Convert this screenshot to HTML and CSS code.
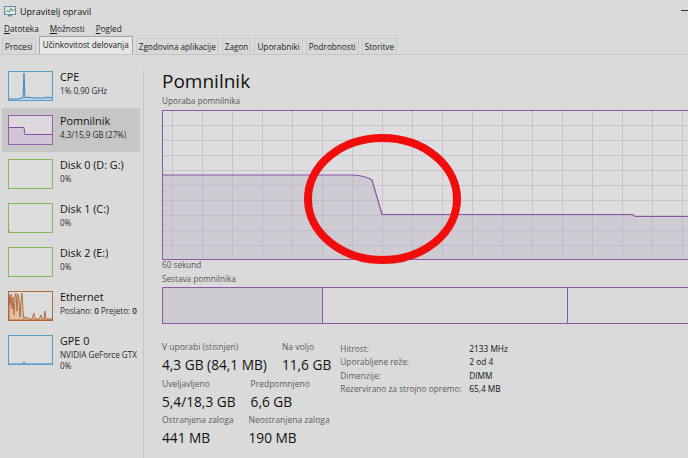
FILE: index.html
```html
<!DOCTYPE html>
<html lang="sl">
<head>
<meta charset="utf-8">
<title>Upravitelj opravil</title>
<link rel="stylesheet" href="styles.css">
</head>
<body>
<div class="window">
  <header class="titlebar">
    <svg class="app-icon" width="12" height="11" viewBox="0 0 12 11">
      <rect x="0.5" y="0.5" width="11" height="8" fill="#dfe8ef" stroke="#6b8aa3"/>
      <polyline points="1.5,6.5 3.5,4.5 5,6 7,2.5 8.5,5 10.5,3" fill="none" stroke="#3a9a48" stroke-width="1"/>
      <rect x="4" y="9" width="4" height="1.5" fill="#7a8c99"/>
    </svg>
    <span class="title">Upravitelj opravil</span>
    <span class="minimize"></span>
  </header>
  <nav class="menubar">
    <span class="menu"><u>D</u>atoteka</span>
    <span class="menu"><u>M</u>ožnosti</span>
    <span class="menu"><u>P</u>ogled</span>
  </nav>
  <div class="tabs">
    <span class="tab">Procesi</span>
    <span class="tab active">Učinkovitost delovanja</span>
    <span class="tab">Zgodovina aplikacije</span>
    <span class="tab">Zagon</span>
    <span class="tab">Uporabniki</span>
    <span class="tab">Podrobnosti</span>
    <span class="tab">Storitve</span>
  </div>
  <div class="panes">
    <aside class="sidebar">
      <div class="item">
        <svg class="thumb" width="45" height="30" viewBox="0 0 45 30">
          <rect x="0.5" y="0.5" width="44" height="29" fill="#dcdcdc" stroke="#5a9bc9"/>
          <polygon points="1,28 10,28 13,27 15,27 16,2 17,27 20,26 25,27 35,27 40,26 44,27 44,29 1,29" fill="#b9d3e6"/>
          <polyline points="1,28 10,28 13,27 15,27 16,2 17,27 20,26 25,27 35,27 40,26 44,27" fill="none" stroke="#3b86c0" stroke-width="1"/>
        </svg>
        <div class="item-text">
          <div class="item-name">CPE</div>
          <div class="item-sub">1% 0,90 GHz</div>
        </div>
      </div>
      <div class="item selected">
        <svg class="thumb" width="45" height="30" viewBox="0 0 45 30">
          <rect x="0.5" y="0.5" width="44" height="29" fill="#dcd8de" stroke="#9b5db5"/>
          <polygon points="1,12.5 16,12.5 17,19.5 44,19.5 44,29 1,29" fill="#d0c4d6"/>
          <polyline points="1,12.5 16,12.5 17,19.5 44,19.5" fill="none" stroke="#8a4aa6" stroke-width="1"/>
        </svg>
        <div class="item-text">
          <div class="item-name">Pomnilnik</div>
          <div class="item-sub">4,3/15,9 GB (27%)</div>
        </div>
      </div>
      <div class="item">
        <svg class="thumb" width="45" height="30" viewBox="0 0 45 30">
          <rect x="0.5" y="0.5" width="44" height="29" fill="#dcdcdc" stroke="#83bb5c"/>
        </svg>
        <div class="item-text">
          <div class="item-name">Disk 0 (D: G:)</div>
          <div class="item-sub">0%</div>
        </div>
      </div>
      <div class="item">
        <svg class="thumb" width="45" height="30" viewBox="0 0 45 30">
          <rect x="0.5" y="0.5" width="44" height="29" fill="#dcdcdc" stroke="#83bb5c"/>
          <polygon points="1,27 2,29 1,29" fill="#4f8f2a"/>
        </svg>
        <div class="item-text">
          <div class="item-name">Disk 1 (C:)</div>
          <div class="item-sub">0%</div>
        </div>
      </div>
      <div class="item">
        <svg class="thumb" width="45" height="30" viewBox="0 0 45 30">
          <rect x="0.5" y="0.5" width="44" height="29" fill="#dcdcdc" stroke="#83bb5c"/>
        </svg>
        <div class="item-text">
          <div class="item-name">Disk 2 (E:)</div>
          <div class="item-sub">0%</div>
        </div>
      </div>
      <div class="item">
        <svg class="thumb" width="45" height="30" viewBox="0 0 45 30">
          <rect x="0.5" y="0.5" width="44" height="29" fill="#dcdcdc" stroke="#b8683a"/>
          <polygon points="1,29 1,4 2,14 3,3 4,18 5,6 6,24 7,4 8,2 9,20 10,3 11,8 12,26 13,10 14,2 15,20 16,28 17,26 18,27 19,26 21,28 24,28 26,22 27,28 31,28 33,24 34,28 36,28 37,20 38,28 41,28 44,28 44,29" fill="#e2c0a6" stroke="#a85a2a" stroke-width="0.8"/>
        </svg>
        <div class="item-text">
          <div class="item-name">Ethernet</div>
          <div class="item-sub">Poslano: <b>0</b> Prejeto: <b>0</b></div>
        </div>
      </div>
      <div class="item">
        <svg class="thumb" width="45" height="30" viewBox="0 0 45 30">
          <rect x="0.5" y="0.5" width="44" height="29" fill="#dcdcdc" stroke="#5a9bc9"/>
          <polygon points="1,28.5 15,28.5 16,26 17,28.5 44,28.5 44,29 1,29" fill="#3b86c0"/>
        </svg>
        <div class="item-text">
          <div class="item-name">GPE 0</div>
          <div class="item-sub">NVIDIA GeForce GTX</div>
          <div class="item-sub">0%</div>
        </div>
      </div>
    </aside>
    <div class="divider"></div>
    <main class="content">
      <h1 class="heading">Pomnilnik</h1>
      <div class="caption caption-top">Uporaba pomnilnika</div>
      <div class="graph">
        <svg width="540" height="148" viewBox="0 0 540 148">
          <g stroke="#c7c3ca" stroke-width="1">
            <line x1="9.5" y1="0" x2="9.5" y2="148"/>
            <line x1="39.5" y1="0" x2="39.5" y2="148"/>
            <line x1="69.5" y1="0" x2="69.5" y2="148"/>
            <line x1="99.5" y1="0" x2="99.5" y2="148"/>
            <line x1="129.5" y1="0" x2="129.5" y2="148"/>
            <line x1="159.5" y1="0" x2="159.5" y2="148"/>
            <line x1="189.5" y1="0" x2="189.5" y2="148"/>
            <line x1="219.5" y1="0" x2="219.5" y2="148"/>
            <line x1="249.5" y1="0" x2="249.5" y2="148"/>
            <line x1="279.5" y1="0" x2="279.5" y2="148"/>
            <line x1="309.5" y1="0" x2="309.5" y2="148"/>
            <line x1="339.5" y1="0" x2="339.5" y2="148"/>
            <line x1="369.5" y1="0" x2="369.5" y2="148"/>
            <line x1="399.5" y1="0" x2="399.5" y2="148"/>
            <line x1="429.5" y1="0" x2="429.5" y2="148"/>
            <line x1="459.5" y1="0" x2="459.5" y2="148"/>
            <line x1="489.5" y1="0" x2="489.5" y2="148"/>
            <line x1="519.5" y1="0" x2="519.5" y2="148"/>
            <line x1="0" y1="14.5" x2="540" y2="14.5"/>
            <line x1="0" y1="29.5" x2="540" y2="29.5"/>
            <line x1="0" y1="44.5" x2="540" y2="44.5"/>
            <line x1="0" y1="59.5" x2="540" y2="59.5"/>
            <line x1="0" y1="74.5" x2="540" y2="74.5"/>
            <line x1="0" y1="89.5" x2="540" y2="89.5"/>
            <line x1="0" y1="104.5" x2="540" y2="104.5"/>
            <line x1="0" y1="119.5" x2="540" y2="119.5"/>
            <line x1="0" y1="134.5" x2="540" y2="134.5"/>
          </g>
          <path d="M0,64 L189,64 Q202,64.5 209,69 L219,103.5 L470,103.5 L472,105.5 L540,105.5 L540,148 L0,148 Z" fill="#b8b2bd" fill-opacity="0.4"/>
          <path d="M0,64 L189,64 Q202,64.5 209,69 L219,103.5 L470,103.5 L472,105.5 L540,105.5" fill="none" stroke="#8b52a8" stroke-width="1.2"/>
        </svg>
      </div>
      <div class="caption">60 sekund</div>
      <div class="caption caption-gap">Sestava pomnilnika</div>
      <div class="composition">
        <div class="seg seg-used"></div>
        <div class="seg seg-standby"></div>
        <div class="seg seg-free"></div>
      </div>
      <div class="stats">
        <div class="stats-left">
          <div class="stat-row">
            <div class="stat"><div class="label">V uporabi (stisnjen)</div><div class="value">4,3 GB (84,1 MB)</div></div>
            <div class="stat"><div class="label">Na voljo</div><div class="value">11,6 GB</div></div>
          </div>
          <div class="stat-row">
            <div class="stat"><div class="label">Uveljavljeno</div><div class="value">5,4/18,3 GB</div></div>
            <div class="stat"><div class="label">Predpomnjeno</div><div class="value">6,6 GB</div></div>
          </div>
          <div class="stat-row">
            <div class="stat"><div class="label">Ostranjena zaloga</div><div class="value">441 MB</div></div>
            <div class="stat"><div class="label">Neostranjena zaloga</div><div class="value">190 MB</div></div>
          </div>
        </div>
        <div class="props">
          <div class="prop"><span class="prop-label">Hitrost:</span><span class="prop-value">2133 MHz</span></div>
          <div class="prop"><span class="prop-label">Uporabljene reže:</span><span class="prop-value">2 od 4</span></div>
          <div class="prop"><span class="prop-label">Dimenzije:</span><span class="prop-value">DIMM</span></div>
          <div class="prop"><span class="prop-label">Rezervirano za strojno opremo:</span><span class="prop-value">65,4 MB</span></div>
        </div>
      </div>
      <svg class="highlight" width="166" height="136" viewBox="0 0 166 136">
        <ellipse cx="82.5" cy="68" rx="74.5" ry="61" fill="none" stroke="#f20d0d" stroke-width="8"/>
      </svg>
    </main>
  </div>
</div>
</body>
</html>
```

FILE: styles.css
```css
html, body {
  margin: 0;
  padding: 0;
  background: #dadada;
  overflow: hidden;
}
body {
  width: 688px;
  height: 458px;
  font-family: "Open Sans", "Noto Sans", sans-serif;
  color: #1a1a1a;
}
.window {
  display: flex;
  flex-direction: column;
  height: 458px;
}
.titlebar {
  height: 22px;
  display: flex;
  align-items: center;
  padding-left: 4px;
  position: relative;
}
.app-icon {
  margin-right: 4px;
  flex: none;
}
.title {
  font-size: 9px;
  color: #111;
}
.minimize {
  position: absolute;
  right: 0;
  top: 10px;
  width: 7px;
  height: 1px;
  background: #333;
}
.menubar {
  height: 13px;
  display: flex;
  align-items: center;
  gap: 11px;
  padding-left: 4px;
  font-size: 8.2px;
}
.menu u {
  text-decoration: underline;
  text-underline-offset: 1px;
}
.tabs {
  height: 18px;
  display: flex;
  align-items: flex-end;
  gap: 3px;
  padding-left: 2px;
  border-top: 1px solid #d2d2d2;
  border-bottom: 1px solid #c6c6c6;
}
.tab {
  height: 15px;
  line-height: 15px;
  padding: 0 2px;
  font-size: 8.2px;
  color: #1a1a1a;
  background: #d8d8d8;
  border: 1px solid #cacaca;
  border-bottom: none;
}
.tab.active {
  height: 17px;
  line-height: 16px;
  padding: 0 3px;
  background: #e6e6e6;
  border-color: #a5a5a5;
}
.panes {
  flex: 1;
  display: flex;
  min-height: 0;
}
.sidebar {
  width: 138px;
  padding: 9px 3px 0 2px;
  display: flex;
  flex-direction: column;
  flex: none;
}
.item {
  height: 44px;
  display: flex;
  align-items: flex-start;
  padding: 7px 0 0 6px;
  box-sizing: border-box;
  gap: 7px;
}
.item.selected {
  background: #c6c6c6;
}
.thumb {
  flex: none;
  display: block;
}
.item-text {
  white-space: nowrap;
  overflow: hidden;
  margin-top: -1px;
}
.item-name {
  font-size: 10.8px;
  line-height: 14.7px;
  color: #111;
}
.item-sub {
  font-size: 8.1px;
  line-height: 11px;
  color: #2a2a2a;
}
.item-sub b {
  font-weight: 600;
}
.divider {
  width: 1px;
  background: #c6c6c6;
  margin-top: 16px;
  flex: none;
}
.content {
  flex: 1;
  position: relative;
  padding-left: 18px;
  overflow: hidden;
  min-width: 0;
}
.heading {
  margin: 13px 0 0;
  font-size: 19px;
  font-weight: 400;
  line-height: 26px;
  color: #111;
}
.caption {
  font-size: 8.2px;
  line-height: 10.5px;
  color: #555;
}
.caption-top {
  margin-top: 2px;
}
.caption-gap {
  margin-top: 3px;
}
.graph {
  margin-top: 3.5px;
  width: 540px;
  height: 148px;
  border: 1px solid #8a5aa8;
  background: #dddcdf;
}
.graph svg {
  display: block;
}
.composition {
  margin-top: 3px;
  width: 540px;
  height: 35px;
  border: 1px solid #8a5aa8;
  display: flex;
}
.seg {
  height: 100%;
}
.seg-used {
  width: 159px;
  background: #cdcbcf;
  border-right: 1px solid #8a5aa8;
}
.seg-standby {
  width: 244px;
  background: #dad9db;
  border-right: 1px solid #8a5aa8;
}
.seg-free {
  flex: 1;
  background: #dad9db;
}
.stats {
  margin-top: 17px;
  display: flex;
  gap: 9px;
}
.stats-left {
  display: flex;
  flex-direction: column;
}
.stat-row {
  display: flex;
  gap: 15px;
}
.label {
  font-size: 8.5px;
  line-height: 12px;
  color: #5a5a5a;
}
.value {
  font-size: 13.7px;
  line-height: 24.5px;
  color: #111;
}
.props {
  display: flex;
  flex-direction: column;
  margin-top: 1px;
}
.prop {
  display: flex;
  font-size: 8.3px;
  line-height: 13.3px;
}
.prop-label {
  width: 129px;
  flex: none;
  color: #5a5a5a;
}
.prop-value {
  color: #111;
}
.highlight {
  position: absolute;
  left: 156px;
  top: 76px;
}
```
